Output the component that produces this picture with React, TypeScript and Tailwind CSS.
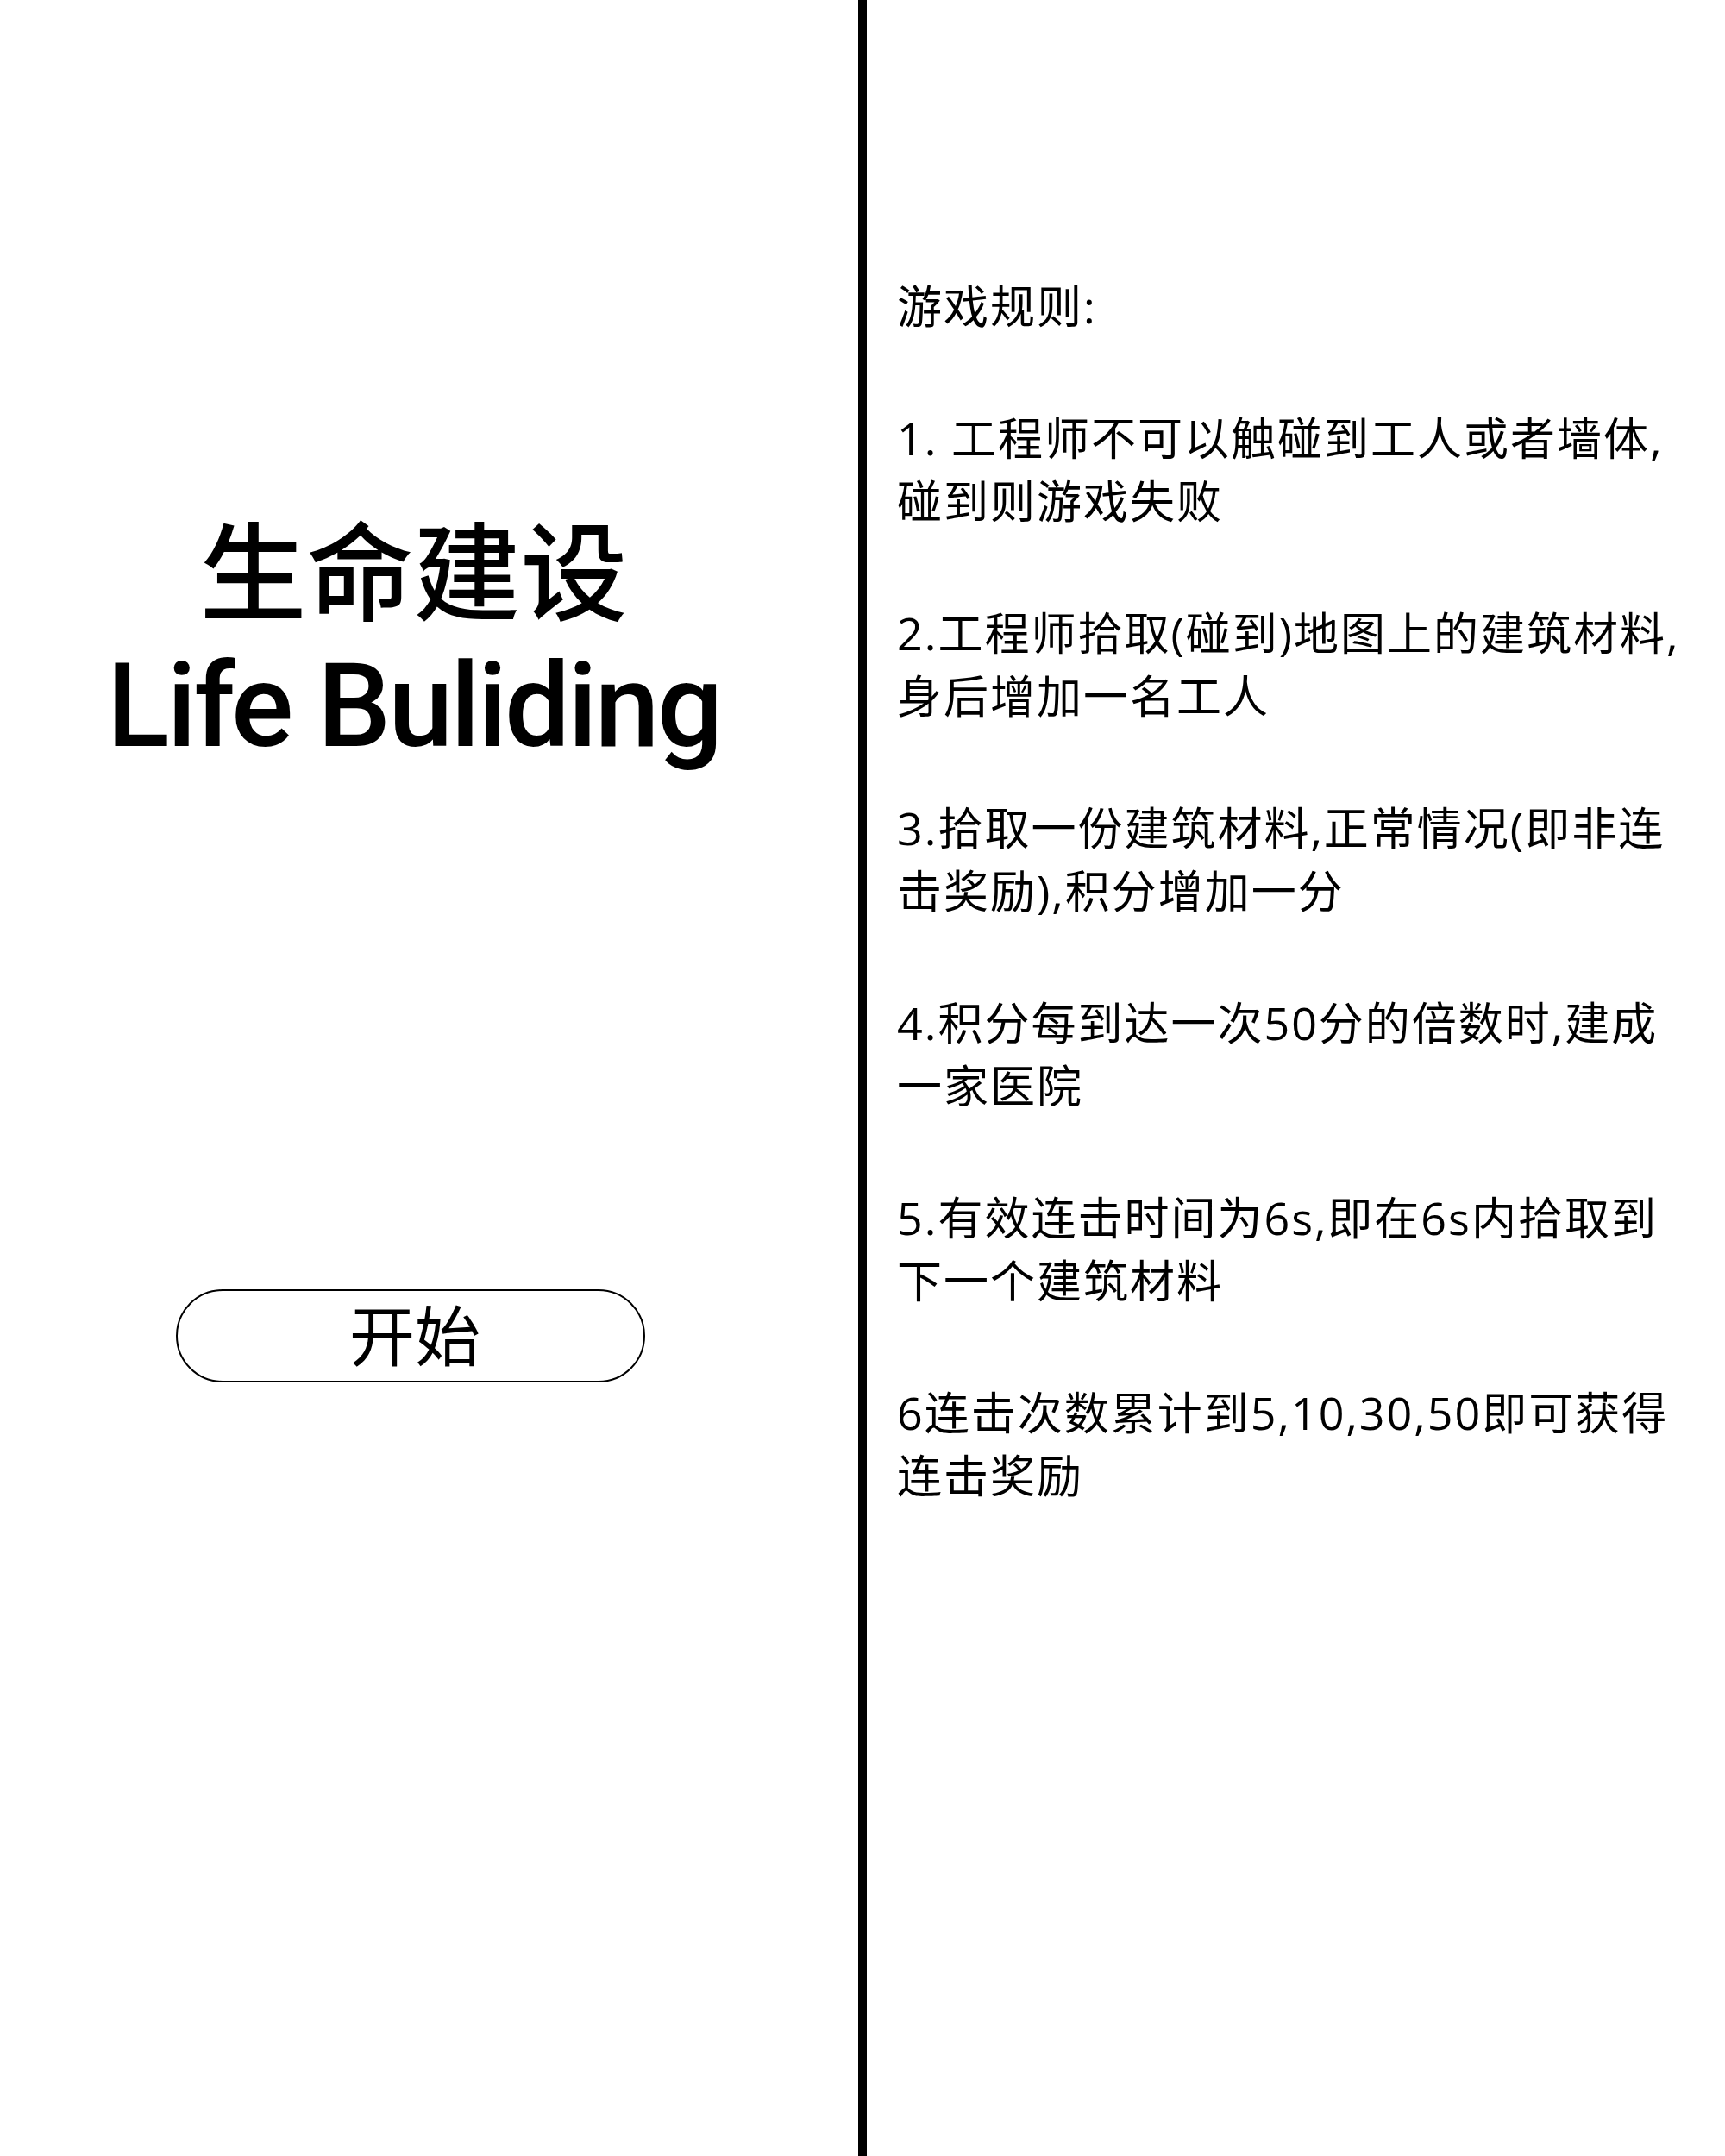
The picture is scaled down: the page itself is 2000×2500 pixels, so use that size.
import React from 'react';

const rules: string[][] = [
  ['1. 工程师不可以触碰到工人或者墙体,', '碰到则游戏失败'],
  ['2.工程师拾取(碰到)地图上的建筑材料,', '身后增加一名工人'],
  ['3.拾取一份建筑材料,正常情况(即非连', '击奖励),积分增加一分'],
  ['4.积分每到达一次50分的倍数时,建成', '一家医院'],
  ['5.有效连击时间为6s,即在6s内拾取到', '下一个建筑材料'],
  ['6连击次数累计到5,10,30,50即可获得', '连击奖励'],
];

const App: React.FC = () => {
  return (
    <div className="flex h-[2500px] w-[2000px] bg-white font-['Open_Sans','Noto_Sans_CJK_SC',sans-serif] text-black">
      {/* left: title + start button */}
      <div className="flex w-[995px] flex-col items-center pr-[36px] pt-[600px]">
        <h1 className="flex flex-col items-center text-center">
          <span className="mb-[28px] text-[124px] leading-[124px] font-medium">生命建设</span>
          <span className="font-['Roboto',sans-serif] text-[135px] leading-[135px] font-medium tracking-[-3px]">
            Life Buliding
          </span>
        </h1>
        <button
          type="button"
          className="mt-[608px] mr-[8px] flex h-[108px] w-[544px] items-center justify-center rounded-full border-2 border-black pl-[11px] text-[76px] leading-none"
        >
          开始
        </button>
      </div>

      <div className="h-full w-[10px] bg-black" />

      {/* right: game rules */}
      <div className="flex flex-1 flex-col gap-[80px] pl-[35px] pt-[318px] text-[52px] leading-[73px] tracking-[2px]">
        <p>游戏规则:</p>
        {rules.map((lines, i) => (
          <p key={i} className="whitespace-nowrap">
            {lines[0]}
            <br />
            {lines[1]}
          </p>
        ))}
      </div>
    </div>
  );
};

export default App;
